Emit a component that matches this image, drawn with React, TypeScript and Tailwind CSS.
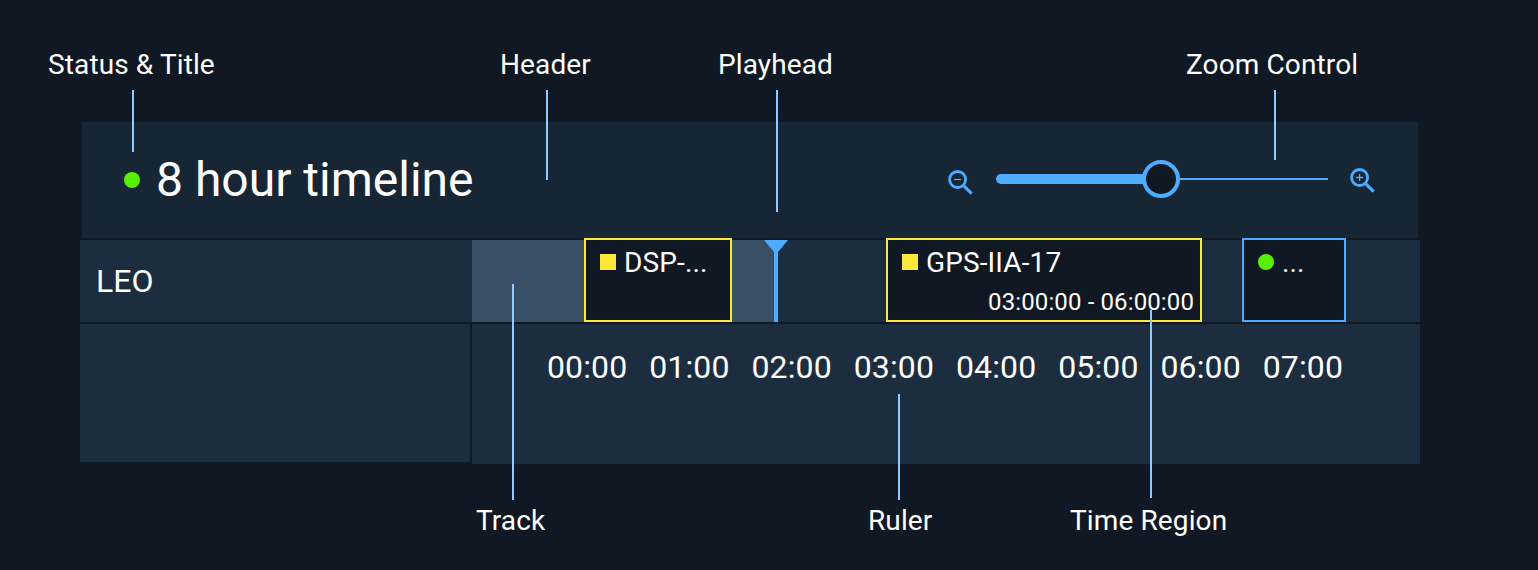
import React from "react";

const ticks = ["00:00", "01:00", "02:00", "03:00", "04:00", "05:00", "06:00", "07:00"];

function ZoomIcon({ plus, className }: { plus?: boolean; className: string }) {
  return (
    <svg viewBox="0 0 26 26" className={className} fill="none" stroke="#4dacff">
      <circle cx="10.6" cy="10.5" r="8" strokeWidth="2.8" />
      <path d="M16.8 16.8 L24.7 24.7" strokeWidth="3.1" />
      <path d={plus ? "M7.1 10.5 H14.1 M10.6 7 V14" : "M7.1 10.5 H14.1"} strokeWidth="1.3" />
    </svg>
  );
}

function Label({ text, className }: { text: string; className: string }) {
  return <span className={`absolute whitespace-nowrap text-[28px] leading-8 tracking-[0.12px] ${className}`}>{text}</span>;
}

function Pointer({ className }: { className: string }) {
  return <span className={`absolute w-0.5 bg-[#92cbff] ${className}`} />;
}

export default function App() {
  return (
    <div className="relative h-[570px] w-[1538px] overflow-hidden bg-[#101923] pt-[122px] pl-20 font-['Roboto',sans-serif] text-white">
      <main className="w-[1340px]">
        <header className="mx-0.5 flex h-[116px] items-center bg-[#172635] pr-[43px] pl-[42px]">
          <span className="size-4 rounded-full bg-[#56f000]" />
          <h1 className="ml-4 text-[48px] leading-[56px]">8 hour timeline</h1>
          <div className="ml-auto flex items-center">
            <ZoomIcon className="mt-1 size-[26px]" />
            <div className="mb-0.5 ml-[23px] flex h-[38px] w-[332px] items-center">
              <span className="-mr-1 h-2.5 w-[150px] rounded-l-full bg-[#4dacff]" />
              <span className="size-[38px] rounded-full border-4 border-[#4dacff] bg-[#101923]" />
              <span className="h-0.5 flex-1 bg-[#4dacff]" />
            </div>
            <ZoomIcon plus className="ml-[21px] size-[26px]" />
          </div>
        </header>

        <section className="mt-0.5 flex h-[82px] bg-[#1c2d3f]">
          <div className="flex w-[392px] items-center pl-4 text-[32px]">LEO</div>
          <div className="relative flex-1">
            <div className="h-full w-[304px] bg-[#384f65]" />
            <div className="absolute -top-0.5 left-28 h-[84px] w-[148px] border-2 border-[#fce83a] bg-[#101923] px-3.5 pt-1.5">
              <div className="flex h-8 items-center gap-2 text-[28px] tracking-[0.12px]">
                <span className="size-4 bg-[#fce83a]" />
                <span className="pt-0.5 leading-8">DSP-...</span>
              </div>
            </div>
            <svg viewBox="0 0 24 82" className="absolute top-0 left-[292px] h-[82px] w-6" fill="#4dacff">
              <path d="M0 0 H24 L14 12 V82 H10 V12 Z" />
            </svg>
            <div className="absolute -top-0.5 left-[414px] h-[84px] w-[316px] border-2 border-[#fce83a] bg-[#101923] pt-1.5 pr-1.5 pl-3.5">
              <div className="flex h-8 items-center gap-2 text-[28px] tracking-[0.12px]">
                <span className="size-4 bg-[#fce83a]" />
                <span className="pt-0.5 leading-8">GPS-IIA-17</span>
              </div>
              <div className="mt-2 text-right text-2xl leading-8 tracking-[0.12px]">03:00:00 - 06:00:00</div>
            </div>
            <div className="absolute -top-0.5 left-[770px] h-[84px] w-[104px] border-2 border-[#4dacff] bg-[#101923] px-3.5 pt-1.5">
              <div className="flex h-8 items-center gap-2 text-[28px] tracking-[0.12px]">
                <span className="size-4 rounded-full bg-[#56f000]" />
                <span className="pt-0.5 leading-8">...</span>
              </div>
            </div>
          </div>
        </section>

        <section className="mt-0.5 flex items-start gap-0.5">
          <div className="h-[138px] w-[390px] bg-[#1c2d3f]" />
          <div className="flex h-[140px] flex-1 bg-[#1c2d3f] pt-6 pl-16">
            {ticks.map((tick) => (
              <span key={tick} className="w-[102.25px] text-center text-[32px] leading-[38px] tracking-[0.1px]">{tick}</span>
            ))}
          </div>
        </section>
      </main>

      <Label text="Status &amp; Title" className="top-[49px] left-12" />
      <Label text="Header" className="top-[49px] left-[500px]" />
      <Label text="Playhead" className="top-[49px] left-[718px]" />
      <Label text="Zoom Control" className="top-[49px] left-[1186px]" />
      <Label text="Track" className="top-[505px] left-[476px]" />
      <Label text="Ruler" className="top-[505px] left-[868px]" />
      <Label text="Time Region" className="top-[505px] left-[1070px]" />

      <Pointer className="top-[90px] left-[132px] h-[62px]" />
      <Pointer className="top-[90px] left-[546px] h-[90px]" />
      <Pointer className="top-[90px] left-[776px] h-[122px]" />
      <Pointer className="top-[90px] left-[1274px] h-[70px]" />
      <Pointer className="top-[284px] left-[512px] h-[216px]" />
      <Pointer className="top-[394px] left-[898px] h-[106px]" />
      <Pointer className="top-[310px] left-[1150px] h-[188px]" />
    </div>
  );
}
